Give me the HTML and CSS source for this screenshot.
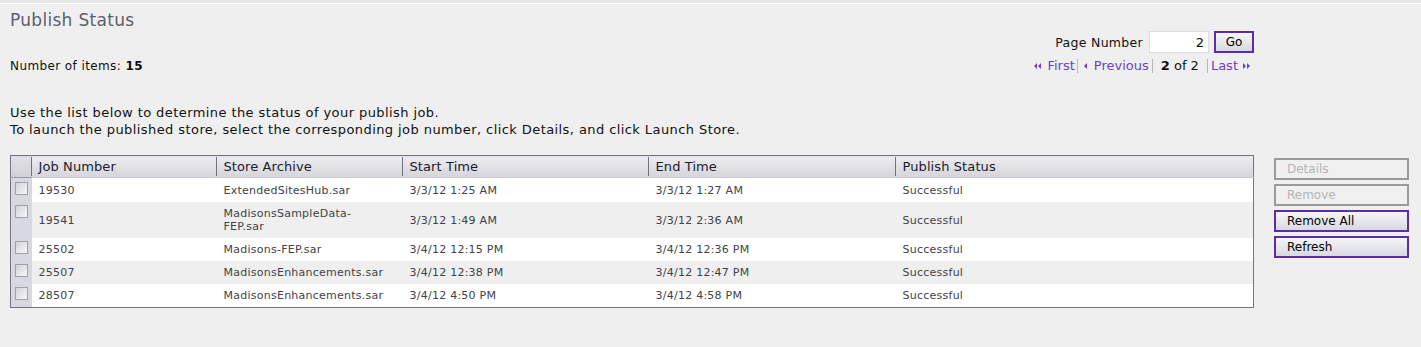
FILE: index.html
```html
<!DOCTYPE html>
<html>
<head>
<meta charset="utf-8">
<title>Publish Status</title>
<link rel="stylesheet" href="styles.css">
</head>
<body>
<div class="topbar"></div>
<div class="page">
  <h1 class="title">Publish Status</h1>
  <div class="pager-row">
    <div class="count">Number of items: <b>15</b></div>
    <div class="pager">
      <div class="goto">
        <span class="goto-label">Page Number</span>
        <input class="goto-input" type="text" value="2">
        <button class="btn go">Go</button>
      </div>
      <div class="nav">
        <a class="nav-link" href="#"><svg class="arr" width="7" height="6" viewBox="0 0 7 6"><path d="M0 3 L3 0 L3 6 Z M4 3 L7 0 L7 6 Z" fill="#6a3fc8"/></svg>First</a><span class="sep s1"></span><a class="nav-link" href="#"><svg class="arr a1" width="3" height="6" viewBox="0 0 3 6"><path d="M0 3 L3 0 L3 6 Z" fill="#6a3fc8"/></svg>Previous</a><span class="sep s2"></span><span class="cur"><b>2</b> of 2</span><span class="sep s3"></span><a class="nav-link last" href="#">Last<svg class="arr" width="7" height="6" viewBox="0 0 7 6"><path d="M0 0 L3 3 L0 6 Z M4 0 L7 3 L4 6 Z" fill="#6a3fc8"/></svg></a>
      </div>
    </div>
  </div>
  <p class="intro">Use the list below to determine the status of your publish job.<br>To launch the published store, select the corresponding job number, click Details, and click Launch Store.</p>
  <div class="list-area">
    <table class="grid">
      <colgroup>
        <col class="c-chk"><col class="c-job"><col class="c-arch"><col class="c-start"><col class="c-end"><col class="c-stat">
      </colgroup>
      <thead>
        <tr>
          <th class="chk-h"></th>
          <th>Job Number</th>
          <th>Store Archive</th>
          <th>Start Time</th>
          <th>End Time</th>
          <th class="last">Publish Status</th>
        </tr>
      </thead>
      <tbody>
        <tr class="odd tall">
          <td class="chk"><input type="checkbox" class="cb"></td>
          <td>19530</td><td>ExtendedSitesHub.sar</td><td>3/3/12 1:25 AM</td><td>3/3/12 1:27 AM</td><td>Successful</td>
        </tr>
        <tr class="even">
          <td class="chk"><input type="checkbox" class="cb"></td>
          <td>19541</td><td>MadisonsSampleData-<br>FEP.sar</td><td>3/3/12 1:49 AM</td><td>3/3/12 2:36 AM</td><td>Successful</td>
        </tr>
        <tr class="odd">
          <td class="chk"><input type="checkbox" class="cb"></td>
          <td>25502</td><td>Madisons-FEP.sar</td><td>3/4/12 12:15 PM</td><td>3/4/12 12:36 PM</td><td>Successful</td>
        </tr>
        <tr class="even">
          <td class="chk"><input type="checkbox" class="cb"></td>
          <td>25507</td><td>MadisonsEnhancements.sar</td><td>3/4/12 12:38 PM</td><td>3/4/12 12:47 PM</td><td>Successful</td>
        </tr>
        <tr class="odd">
          <td class="chk"><input type="checkbox" class="cb"></td>
          <td>28507</td><td>MadisonsEnhancements.sar</td><td>3/4/12 4:50 PM</td><td>3/4/12 4:58 PM</td><td>Successful</td>
        </tr>
      </tbody>
    </table>
    <div class="actions">
      <button class="btn side disabled">Details</button>
      <button class="btn side disabled">Remove</button>
      <button class="btn side">Remove All</button>
      <button class="btn side">Refresh</button>
    </div>
  </div>
</div>
</body>
</html>
```
FILE: styles.css
```css
html, body {
  margin: 0;
  padding: 0;
}
body {
  background: #efefef;
  font-family: "DejaVu Sans", Verdana, sans-serif;
  font-size: 12px;
  color: #111;
}
.topbar {
  height: 3px;
  background: #e6e6e6;
  border-bottom: 1px solid #ffffff;
}
.page {
  padding: 0 10px;
}
.title {
  margin: 0;
  padding-top: 6px;
  font-size: 17px;
  letter-spacing: 0.3px;
  font-weight: normal;
  line-height: 20px;
  color: #5e5e6e;
}
.pager-row {
  width: 1244px;
  display: flex;
  justify-content: space-between;
  align-items: flex-end;
  margin-top: 1px;
}
.count {
  line-height: 16px;
  margin-bottom: 0;
  letter-spacing: 0.4px;
}
.count b {
  font-weight: bold;
}
.pager {
  display: flex;
  flex-direction: column;
  align-items: flex-end;
}
.goto {
  display: flex;
  align-items: center;
  height: 22px;
}
.goto-label {
  margin-right: 6px;
  font-size: 12.5px;
  letter-spacing: 0.3px;
}
.goto-input {
  box-sizing: border-box;
  width: 60px;
  height: 22px;
  border: 1px solid #dcdcdc;
  background: #fff;
  font-family: inherit;
  font-size: 13px;
  text-align: right;
  padding: 0 4px;
  color: #000;
  margin: 0;
}
.btn {
  box-sizing: border-box;
  font-family: inherit;
  font-size: 12px;
  color: #000;
  border: 2px solid #5b2ea3;
  background: linear-gradient(#f6f6f8, #d8d8e2);
  margin: 0;
  cursor: pointer;
}
.go {
  width: 40px;
  height: 22px;
  margin-left: 5px;
  padding: 0;
}
.nav {
  display: flex;
  align-items: center;
  margin-top: 5px;
  line-height: 16px;
  margin-right: 4px;
  font-size: 13px;
}
.nav-link {
  color: #6a3fc8;
  text-decoration: none;
  display: flex;
  align-items: center;
}
.nav-link .arr {
  margin: 0 6px 0 0;
}
.nav-link .arr.a1 {
  margin-right: 7px;
}
.nav-link.last .arr {
  margin: 0 0 0 5px;
}
.sep {
  display: inline-block;
  width: 1px;
  height: 14px;
  background: #b8b8b8;
}
.s1 { margin: 0 6px 0 2px; }
.s2 { margin: 0 8px 0 3px; }
.s3 { margin: 0 3px 0 8px; }
.cur {
  color: #111;
}
.intro {
  margin: 30px 0 0 0;
  line-height: 17px;
  font-size: 13px;
  letter-spacing: 0.42px;
}
.list-area {
  display: flex;
  align-items: flex-start;
  margin-top: 17px;
}
.grid {
  width: 1244px;
  border-collapse: collapse;
  table-layout: fixed;
  border: 1px solid #75757f;
  background: #fff;
}
.c-chk { width: 21px; }
.c-job { width: 185px; }
.c-arch { width: 186px; }
.c-start { width: 246px; }
.c-end { width: 247px; }
.grid th {
  position: relative;
  height: 21px;
  padding: 0 7px;
  text-align: left;
  font-weight: normal;
  font-size: 13px;
  letter-spacing: 0.1px;
  color: #1c1c2c;
  background: linear-gradient(#ececf0, #d4d4da);
  border-bottom: 1px solid #c8c8ce;
  white-space: nowrap;
}
.grid th::after {
  content: "";
  position: absolute;
  right: 0;
  top: 1px;
  bottom: 1px;
  width: 1px;
  background: #72727c;
}
.grid th.last::after {
  display: none;
}
.grid th.chk-h {
  padding: 0;
  background: linear-gradient(#e0e0e6, #d0d0d8);
  border-bottom: 1px solid #9a9aa4;
}
.grid td {
  padding: 5px 7px 5px 7px;
  font-size: 11px;
  letter-spacing: 0.25px;
  line-height: 13px;
  color: #424248;
  vertical-align: middle;
}
.grid tr.tall td {
  padding-top: 6px;
}
.grid tr.tall td.chk {
  padding-top: 4px;
}
.odd td { background: #ffffff; }
.even td { background: #efefef; }
.grid td.chk {
  background: #d8d8e0;
  padding: 3px 0 0 4px;
  vertical-align: top;
}
.cb {
  -webkit-appearance: none;
  appearance: none;
  display: block;
  width: 13px;
  height: 13px;
  margin: 0;
  border: 1px solid #a0a0a8;
  box-sizing: border-box;
  background: linear-gradient(135deg, #d2d2d8, #f8f8fa);
}
.actions {
  margin-left: 20px;
  margin-top: 3px;
  display: flex;
  flex-direction: column;
  gap: 4px;
}
.side {
  width: 135px;
  height: 22px;
  text-align: left;
  padding: 0 0 0 11px;
  line-height: 16px;
}
.side.disabled {
  border-color: #9a9a9a;
  color: #b4b4b4;
  background-color: #f0f0f0;
  background-image: radial-gradient(#d4d4d4 0.6px, transparent 0.7px);
  background-size: 2px 2px;
}
```
